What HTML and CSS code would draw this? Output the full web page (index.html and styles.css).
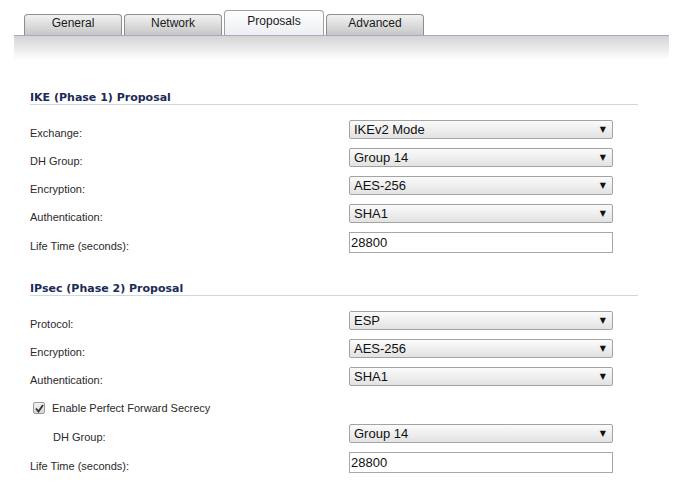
FILE: index.html
```html
<!DOCTYPE html>
<html>
<head>
<meta charset="utf-8">
<link rel="stylesheet" href="styles.css">
</head>
<body>
<div class="tabs">
  <div class="tab">General</div>
  <div class="tab">Network</div>
  <div class="tab active">Proposals</div>
  <div class="tab">Advanced</div>
</div>
<div class="band"></div>
<div class="content">
  <div class="section-title first">IKE (Phase 1) Proposal</div>
  <div class="row"><span class="label">Exchange:</span><div class="select"><span>IKEv2 Mode</span><span class="arrow">▼</span></div></div>
  <div class="row"><span class="label">DH Group:</span><div class="select"><span>Group 14</span><span class="arrow">▼</span></div></div>
  <div class="row"><span class="label">Encryption:</span><div class="select"><span>AES-256</span><span class="arrow">▼</span></div></div>
  <div class="row"><span class="label">Authentication:</span><div class="select"><span>SHA1</span><span class="arrow">▼</span></div></div>
  <div class="row tall"><span class="label">Life Time (seconds):</span><div class="input">28800</div></div>

  <div class="section-title second">IPsec (Phase 2) Proposal</div>
  <div class="row"><span class="label">Protocol:</span><div class="select"><span>ESP</span><span class="arrow">▼</span></div></div>
  <div class="row"><span class="label">Encryption:</span><div class="select"><span>AES-256</span><span class="arrow">▼</span></div></div>
  <div class="row"><span class="label">Authentication:</span><div class="select"><span>SHA1</span><span class="arrow">▼</span></div></div>
  <div class="row check-row">
    <span class="checkbox"><svg width="9" height="9" viewBox="0 0 9 9"><path d="M1 4.5 L3.5 7.5 L8 1" fill="none" stroke="#333" stroke-width="1.8"/></svg></span>
    <span class="check-label">Enable Perfect Forward Secrecy</span>
  </div>
  <div class="row"><span class="label indent">DH Group:</span><div class="select"><span>Group 14</span><span class="arrow">▼</span></div></div>
  <div class="row tall"><span class="label">Life Time (seconds):</span><div class="input">28800</div></div>
</div>
</body>
</html>
```

FILE: styles.css
```css
html, body {
  margin: 0;
  padding: 0;
  background: #ffffff;
  font-family: "Liberation Sans", Arial, sans-serif;
}

.tabs {
  display: flex;
  align-items: flex-end;
  gap: 2px;
  padding-left: 24px;
  padding-top: 10px;
  height: 25px;
}

.tab {
  box-sizing: border-box;
  width: 98px;
  height: 21px;
  border: 1px solid #8e8e8e;
  border-bottom: none;
  border-radius: 4px 4px 0 0;
  background: linear-gradient(#f2f2f2, #c6c6c6);
  font-size: 12px;
  color: #1a1a1a;
  text-align: center;
  line-height: 17px;
}

.tab.active {
  width: 100px;
  height: 25px;
  line-height: 21px;
  background: linear-gradient(#ffffff, #eceef2);
  border-color: #a0a0a0;
}

.band {
  margin-left: 14px;
  width: 655px;
  height: 24px;
  border-top: 1px solid #a8a8c4;
  background: linear-gradient(#d4d4d4, #ffffff);
}

.content {
  padding: 0 40px 0 30px;
}

.section-title {
  font-family: "DejaVu Sans", Verdana, sans-serif;
  font-weight: bold;
  font-size: 11px;
  line-height: 13px;
  color: #1d2a57;
  border-bottom: 1px solid #c9d9e6;
}

.section-title.first {
  margin-top: 31px;
  margin-bottom: 10px;
}

.section-title.second {
  margin-top: 25px;
  margin-bottom: 10px;
}

.row {
  display: flex;
  align-items: center;
  height: 28px;
}

.row.tall {
  height: 30px;
}

.row.check-row {
  box-sizing: border-box;
  height: 29px;
  padding-top: 7px;
}

.label {
  box-sizing: border-box;
  width: 319px;
  flex: none;
  padding-top: 8px;
  font-size: 11px;
  color: #2a2a2a;
}

.label.indent {
  padding-left: 23px;
}

.check-label {
  font-size: 11px;
  color: #2a2a2a;
}

.select {
  box-sizing: border-box;
  width: 264px;
  height: 19px;
  border: 1px solid #a3a3a3;
  border-radius: 2px;
  background: linear-gradient(#fbfbfb, #e2e2e2);
  display: flex;
  align-items: center;
  justify-content: space-between;
  padding: 0 6px 0 4px;
  font-size: 13px;
  color: #111111;
}

.arrow {
  font-family: "DejaVu Sans", sans-serif;
  font-size: 8px;
  color: #111111;
}

.input {
  box-sizing: border-box;
  width: 264px;
  height: 21px;
  border: 1px solid #a8a8a8;
  background: #ffffff;
  padding-left: 1px;
  font-size: 13px;
  line-height: 19px;
  color: #111111;
}

.checkbox {
  box-sizing: border-box;
  width: 12px;
  height: 12px;
  margin-left: 3px;
  margin-right: 7px;
  border: 1px solid #9a9a9a;
  border-radius: 2px;
  background: linear-gradient(#f4f4f4, #d6d6d6);
  display: flex;
  align-items: center;
  justify-content: center;
  flex: none;
}
```
